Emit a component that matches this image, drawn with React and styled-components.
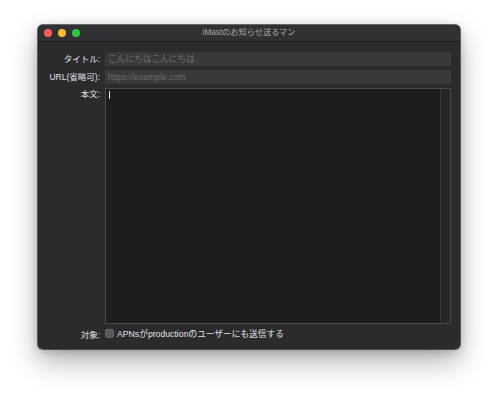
import React from 'react';
import styled, { createGlobalStyle } from 'styled-components';

const FONT = '"Liberation Sans", "Noto Sans CJK JP", sans-serif';

const GlobalStyle = createGlobalStyle`
  html, body {
    margin: 0;
    padding: 0;
    background: #ffffff;
  }
  body {
    font-family: ${FONT};
  }
`;

const Page = styled.div`
  width: 500px;
  height: 400px;
  box-sizing: border-box;
  padding: 25px 40px 0 38px;
  background: #ffffff;
`;

const Window = styled.div`
  width: 422px;
  height: 324px;
  display: flex;
  flex-direction: column;
  background: #2b2b2d;
  border-radius: 5px;
  overflow: hidden;
  box-shadow: 0 0 0 1px rgba(0, 0, 0, 0.55), 0 12px 28px rgba(0, 0, 0, 0.32), 0 2px 8px rgba(0, 0, 0, 0.2);
`;

const TitleBar = styled.div`
  position: relative;
  height: 16px;
  flex-shrink: 0;
  display: flex;
  align-items: center;
  justify-content: center;
  background: #313133;
  border-bottom: 1px solid #1a1a1a;
`;

const Lights = styled.div`
  position: absolute;
  left: 6px;
  top: 4px;
  display: flex;
  gap: 6px;
`;

const Light = styled.span`
  width: 8px;
  height: 8px;
  border-radius: 50%;
  background: ${(p) => p.color};
`;

const Title = styled.div`
  color: #a9a9a9;
  font-size: 8.2px;
  line-height: 16px;
`;

const Body = styled.div`
  flex: 1;
  display: grid;
  grid-template-columns: 62px 1fr;
  grid-template-rows: 14px 14px 1fr 10px;
  column-gap: 5px;
  row-gap: 4px;
  padding: 10px 9px 11px 0;
`;

const Label = styled.div`
  color: #e2e2e2;
  font-size: 8.5px;
  text-align: right;
  line-height: ${(p) => (p.top ? '12px' : '14px')};
  white-space: nowrap;
`;

const Input = styled.div`
  height: 14px;
  box-sizing: border-box;
  padding: 0 3px;
  background: #39393b;
  color: #6c6c6e;
  font-size: 8.7px;
  line-height: 14px;
  white-space: nowrap;
`;

const TextBox = styled.div`
  display: flex;
  background: #1d1d1d;
  border: 1px solid #4a4a4c;
`;

const TextContent = styled.div`
  flex: 1;
  padding: 2px 3px;
`;

const Caret = styled.span`
  display: block;
  width: 1px;
  height: 8px;
  background: #e8e8e8;
`;

const ScrollTrack = styled.div`
  width: 9px;
  background: #262627;
  border-left: 1px solid #363638;
`;

const CheckRow = styled.div`
  display: flex;
  align-items: center;
  gap: 3px;
  margin-top: 1px;
`;

const CheckBox = styled.span`
  width: 9px;
  height: 9px;
  box-sizing: border-box;
  border-radius: 2px;
  background: #58585a;
  border: 1px solid #636365;
`;

const CheckText = styled.span`
  color: #e2e2e2;
  font-size: 8.7px;
  line-height: 10px;
  white-space: nowrap;
`;

const App = () => (
  <>
    <GlobalStyle />
    <Page>
      <Window>
        <TitleBar>
          <Lights>
            <Light color="#fe5f57" />
            <Light color="#febc2e" />
            <Light color="#28c840" />
          </Lights>
          <Title>iMastのお知らせ送るマン</Title>
        </TitleBar>
        <Body>
          <Label>タイトル:</Label>
          <Input>こんにちはこんにちは</Input>
          <Label>URL(省略可):</Label>
          <Input>https://example.com</Input>
          <Label top>本文:</Label>
          <TextBox>
            <TextContent>
              <Caret />
            </TextContent>
            <ScrollTrack />
          </TextBox>
          <Label>対象:</Label>
          <CheckRow>
            <CheckBox />
            <CheckText>APNsがproductionのユーザーにも送信する</CheckText>
          </CheckRow>
        </Body>
      </Window>
    </Page>
  </>
);

export default App;
